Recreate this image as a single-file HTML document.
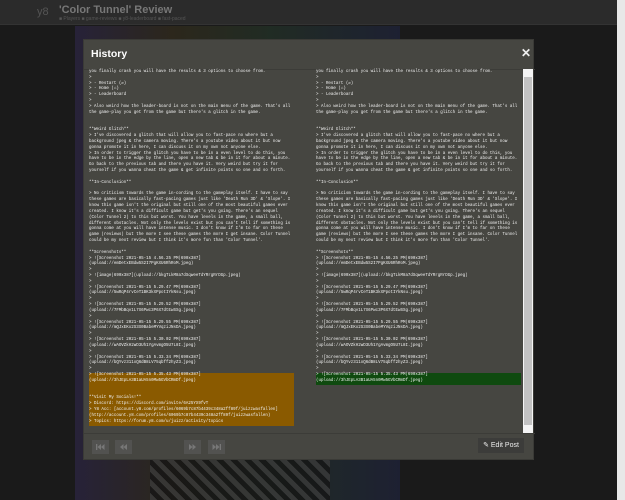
<!DOCTYPE html>
<html><head><style>
*{margin:0;padding:0;box-sizing:border-box}
body{width:625px;height:500px;overflow:hidden;background:#1a1a1a;font-family:"Liberation Sans",sans-serif;position:relative}
.hdr{position:absolute;left:0;top:0;width:617px;height:25px;background:#2b2b2b;border-bottom:1px solid #333;z-index:2}
.hdr .logo{position:absolute;left:37px;top:6px;color:#555;font-size:11px}
.hdr .t{position:absolute;left:59px;top:4px;color:#777;font-size:11px;font-weight:bold}
.hdr .tags{position:absolute;left:59px;top:16px;color:#555;font-size:5px}
.bgimg{position:absolute;left:75px;top:26px;width:325px;height:474px;background:linear-gradient(90deg,#2a2440,#302a1c 30%,#223026 60%,#1e2238);opacity:.8}
.tun{position:absolute;left:150px;top:460px;width:180px;height:40px;background:repeating-linear-gradient(45deg,#3a3a3a 0 5px,#151515 5px 10px);opacity:.8}
.sb{position:absolute;left:617px;top:0;width:8px;height:500px;background:#e8e8e8}
.modal{position:absolute;left:83px;top:39px;width:451px;height:421px;background:#464641;border:1px solid #3a3a36}
.modal h1{position:absolute;left:7px;top:8px;color:#fff;font-size:10.5px;font-weight:bold}
.x{position:absolute;left:437px;top:6px;color:#eee;font-size:12px;font-weight:bold}
.hl1{position:absolute;left:0;top:29px;width:451px;height:1px;background:#3c3c38}
.col{position:absolute;top:30px;font-family:"Liberation Mono",monospace;font-size:4.15px;line-height:5.83px;color:#f0f0f0;white-space:pre}
.l{left:5px;width:206px}.r{left:232px;width:205px}
.hlo{background:#8a5a00;display:block;width:205px}
.hlg{background:#0f4a0f;display:block;width:205px}
.isb{position:absolute;left:439px;top:29px;width:10px;height:364px;background:#f4f4f4}
.isb .th{position:absolute;left:1px;top:8px;width:8px;height:348px;background:#c2c2c2}
.hl2{position:absolute;left:0;top:393px;width:451px;height:1px;background:#3c3c38}
.btn{position:absolute;top:400px;width:17px;height:14px;background:#525250}
.btn svg{position:absolute;left:4px;top:4px}
.edit{position:absolute;left:394px;top:398px;width:46px;height:15px;background:#3c3c3a;color:#eee;font-size:7px;line-height:15px;text-align:center}
</style></head><body>
<div class="hdr"><span class="logo">y8</span><span class="t">'Color Tunnel' Review</span><span class="tags">■ Players ■ game-reviews ■ y8-leaderboard ■ fast-paced</span></div>
<div class="bgimg"></div>
<div class="tun"></div>
<div class="sb"></div>
<div class="modal">
<h1>History</h1><span class="x">✕</span>
<div class="hl1"></div>
<div class="col l">you finally crash you will have the results &amp; 3 options to choose from.
&gt;
&gt; - Restart (↺)
&gt; - Home (⌂)
&gt; - Leaderboard
&gt;
&gt; Also weird how the leader-board is not on the main menu of the game. That's all
the game-play you get from the game but there's a glitch in the game.


**Weird Glitch**
&gt; I've discovered a glitch that will allow you to fast-pace no where but a
background jpeg &amp; the camera moving. There's a youtube video about it but now
gonna promote it in here, I can discuss it on my own not anyone else.
&gt; In order to trigger the glitch you have to be in a even level to do this, you
have to be in the edge by the line, open a new tab &amp; be in it for about a minute.
Go back to the previous tab and there you have it. Very weird but try it for
yourself if you wanna cheat the game &amp; get infinite points so one and so forth.

**In-Conclusion**

&gt; No criticism towards the game in-cording to the gameplay itself. I have to say
these games are basically fast-pacing games just like 'Death Run 3D' &amp; 'Slope'. I
know this game isn't the original but still one of the most beautiful games ever
created. I know it's a difficult game but get's you going. There's an sequel
(Color Tunnel 2) to this but worst. You have levels in the game, a small ball,
different obstacles. Not only the levels exist but you can't tell if something is
gonna come at you will have intense music. I don't know if I'm to far on these
game (reviews) but the more I see these games the more I get insane. Color Tunnel
could be my next review but I think it's more fun than 'Color Tunnel'.

**Screenshots**
&gt; ![Screenshot 2021-05-15 4.56.25 PM|690x387]
(upload://emDetxEBdw5S2I7PgKXU6RhRoM.jpeg)
&gt;
&gt; ![image|690x387](upload://bkgTLkM8a7dSqweeTdYRrgRrDGp.jpeg)
&gt;
&gt; ![Screenshot 2021-05-15 5.29.47 PM|690x387]
(upload://5wRqP4rvCeT1BK3kXPpotIYkNsu.jpeg)
&gt;
&gt; ![Screenshot 2021-05-15 5.29.52 PM|690x387]
(upload://7FMbBqv1L7X6Pwc3P6X7dtEwSSg.jpeg)
&gt;
&gt; ![Screenshot 2021-05-15 5.29.55 PM|690x387]
(upload://mQJxEKx2S3X0BabeMYVqziJNsDA.jpeg)
&gt;
&gt; ![Screenshot 2021-05-15 5.30.02 PM|690x387]
(upload://wAOVZkH2wD3Uh1YgAvmgO5U7L8I.jpeg)
&gt;
&gt; ![Screenshot 2021-05-15 5.33.34 PM|690x387]
(upload://bQYvz311oQ6dB8LV75qbff2hyZ3.jpeg)
&gt;
<span class="hlo">&gt; ![Screenshot 2021-05-15 5.35.43 PM|690x387]
(upload://3hJEpLA3B1aUA5n0Mw5GVbCRmDf.jpeg)


**Visit My Socials!**
&gt; Discord: https://discord.com/invite/6A25YX9fvT
&gt; Y8 Acc: [account.y8.com/profiles/6069b7c87b4439c348a2ff89f/juizzwasfallen]
(http://account.y8.com/profiles/6069b7c87b4439c348a2ff89f/juizzwasfallen)
&gt; Topics: https://forum.y8.com/u/juizz/activity/topics</span></div>
<div class="col r">you finally crash you will have the results &amp; 3 options to choose from.
&gt;
&gt; - Restart (↺)
&gt; - Home (⌂)
&gt; - Leaderboard
&gt;
&gt; Also weird how the leader-board is not on the main menu of the game. That's all
the game-play you get from the game but there's a glitch in the game.


**Weird Glitch**
&gt; I've discovered a glitch that will allow you to fast-pace no where but a
background jpeg &amp; the camera moving. There's a youtube video about it but now
gonna promote it in here, I can discuss it on my own not anyone else.
&gt; In order to trigger the glitch you have to be in a even level to do this, you
have to be in the edge by the line, open a new tab &amp; be in it for about a minute.
Go back to the previous tab and there you have it. Very weird but try it for
yourself if you wanna cheat the game &amp; get infinite points so one and so forth.

**In-Conclusion**

&gt; No criticism towards the game in-cording to the gameplay itself. I have to say
these games are basically fast-pacing games just like 'Death Run 3D' &amp; 'Slope'. I
know this game isn't the original but still one of the most beautiful games ever
created. I know it's a difficult game but get's you going. There's an sequel
(Color Tunnel 2) to this but worst. You have levels in the game, a small ball,
different obstacles. Not only the levels exist but you can't tell if something is
gonna come at you will have intense music. I don't know if I'm to far on these
game (reviews) but the more I see these games the more I get insane. Color Tunnel
could be my next review but I think it's more fun than 'Color Tunnel'.

**Screenshots**
&gt; ![Screenshot 2021-05-15 4.56.25 PM|690x387]
(upload://emDetxEBdw5S2I7PgKXU6RhRoM.jpeg)
&gt;
&gt; ![image|690x387](upload://bkgTLkM8a7dSqweeTdYRrgRrDGp.jpeg)
&gt;
&gt; ![Screenshot 2021-05-15 5.29.47 PM|690x387]
(upload://5wRqP4rvCeT1BK3kXPpotIYkNsu.jpeg)
&gt;
&gt; ![Screenshot 2021-05-15 5.29.52 PM|690x387]
(upload://7FMbBqv1L7X6Pwc3P6X7dtEwSSg.jpeg)
&gt;
&gt; ![Screenshot 2021-05-15 5.29.55 PM|690x387]
(upload://mQJxEKx2S3X0BabeMYVqziJNsDA.jpeg)
&gt;
&gt; ![Screenshot 2021-05-15 5.30.02 PM|690x387]
(upload://wAOVZkH2wD3Uh1YgAvmgO5U7L8I.jpeg)
&gt;
&gt; ![Screenshot 2021-05-15 5.33.34 PM|690x387]
(upload://bQYvz311oQ6dB8LV75qbff2hyZ3.jpeg)
&gt;
<span class="hlg">&gt; ![Screenshot 2021-05-15 5.35.43 PM|690x387]
(upload://3hJEpLA3B1aUA5n0Mw5GVbCRmDf.jpeg)</span></div>
<div class="isb"><div class="th"></div></div>
<div class="hl2"></div>
<div class="btn" style="left:8px"><svg width="9" height="6"><rect x="0" y="0" width="1.3" height="6" fill="#777"/><path d="M5 0L1.5 3L5 6ZM8.5 0L5 3L8.5 6Z" fill="#777"/></svg></div>
<div class="btn" style="left:31px"><svg width="9" height="6"><path d="M4.5 0L1 3L4.5 6ZM8 0L4.5 3L8 6Z" fill="#777"/></svg></div>
<div class="btn" style="left:100px"><svg width="9" height="6"><path d="M1 0L4.5 3L1 6ZM4.5 0L8 3L4.5 6Z" fill="#777"/></svg></div>
<div class="btn" style="left:124px"><svg width="9" height="6"><path d="M0.5 0L4 3L0.5 6ZM4 0L7.5 3L4 6Z" fill="#777"/><rect x="7.7" y="0" width="1.3" height="6" fill="#777"/></svg></div>
<div class="edit">✎ Edit Post</div>
</div>
</body></html>
